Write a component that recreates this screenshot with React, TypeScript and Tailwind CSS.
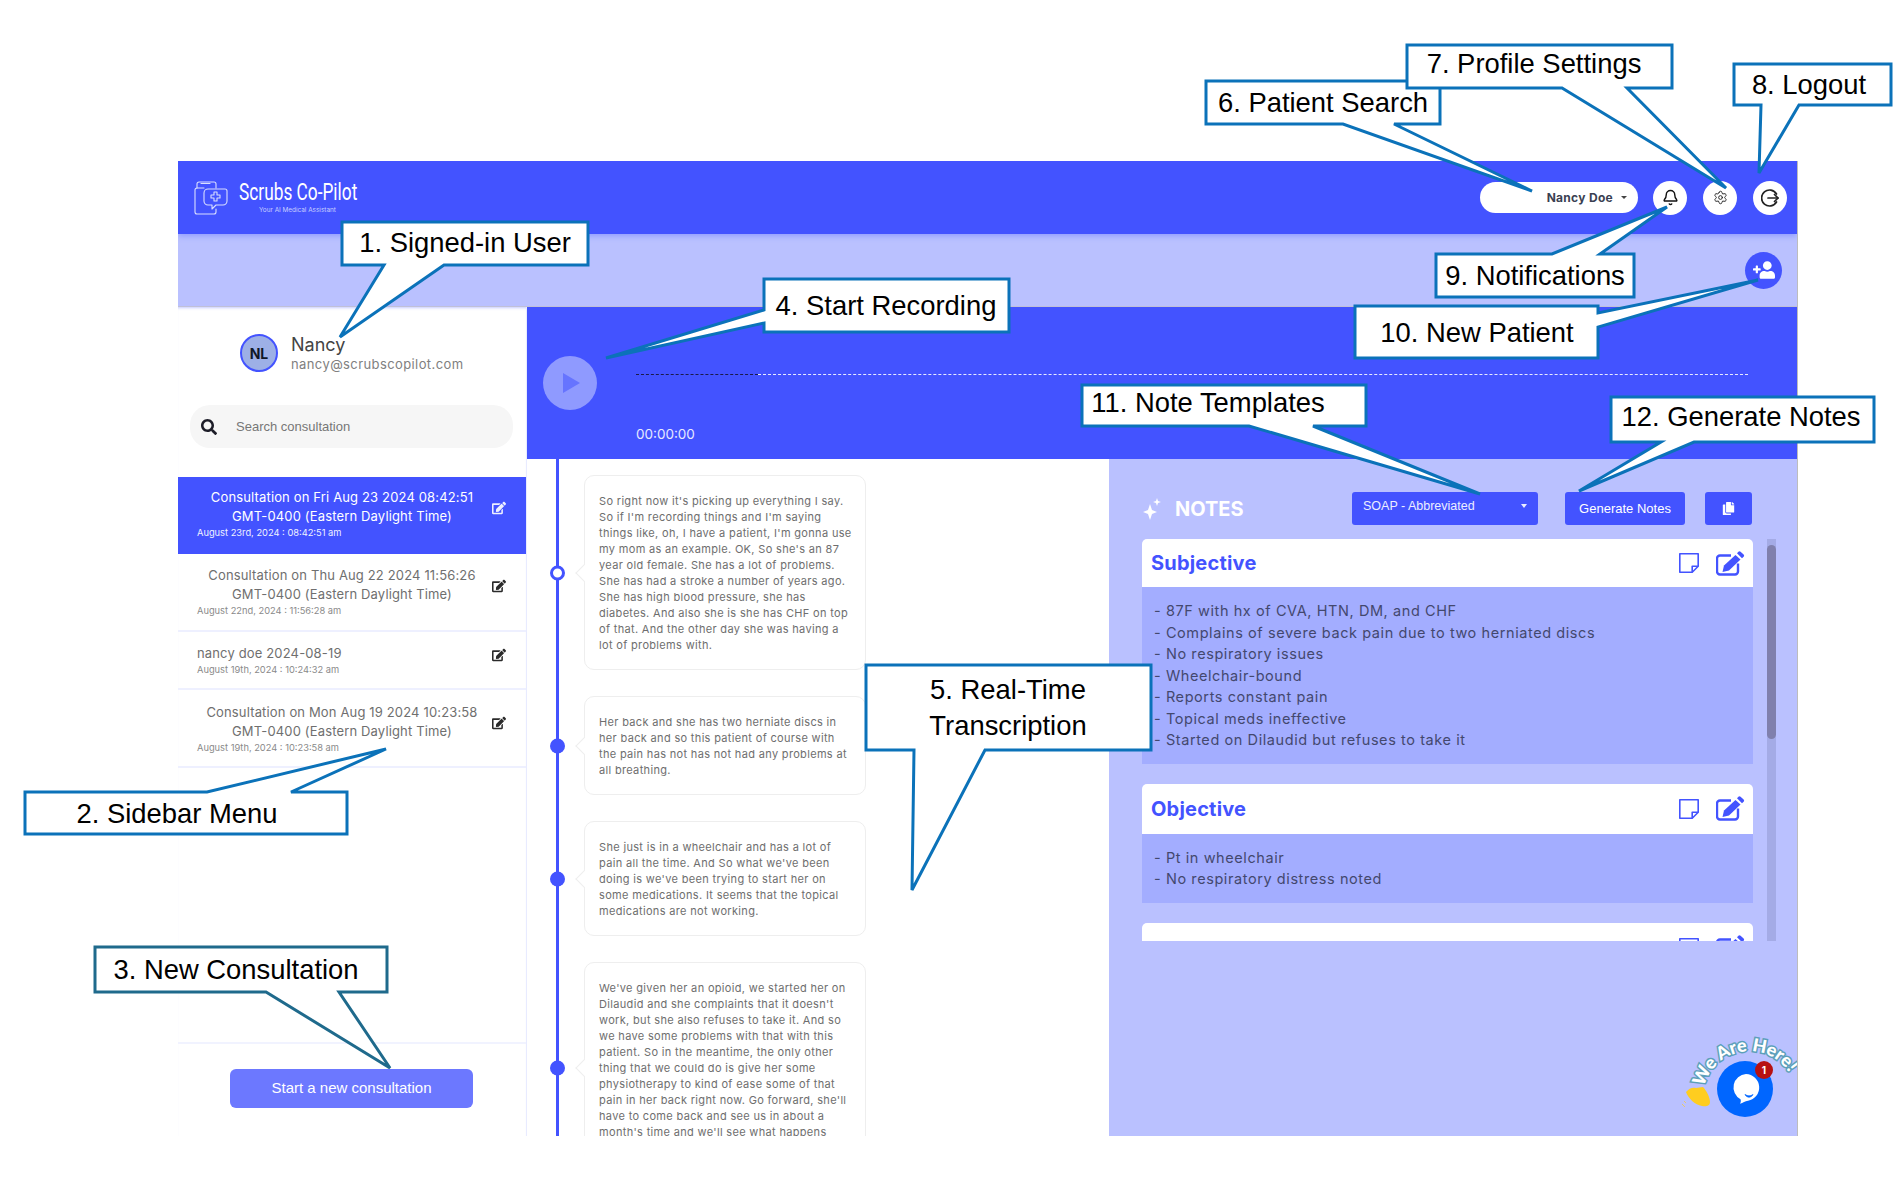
import { Bell, Settings } from 'lucide-react'
import { FaEdit, FaSearch, FaUserPlus, FaCopy } from 'react-icons/fa'

const consultations = [
  { title: ['Consultation on Fri Aug 23 2024 08:42:51', 'GMT-0400 (Eastern Daylight Time)'], date: 'August 23rd, 2024 : 08:42:51 am', row: 'h-[77px] pt-[11px] bg-[#4353ff] text-white', active: true },
  { title: ['Consultation on Thu Aug 22 2024 11:56:26', 'GMT-0400 (Eastern Daylight Time)'], date: 'August 22nd, 2024 : 11:56:28 am', row: 'h-[78px] pt-[12px] border-b-2 border-[#eef0ff] text-[#6f6f6f]' },
  { title: ['nancy doe 2024-08-19'], date: 'August 19th, 2024 : 10:24:32 am', row: 'h-[58px] pt-[12px] border-b-2 border-[#eef0ff] text-[#6f6f6f]', left: true },
  { title: ['Consultation on Mon Aug 19 2024 10:23:58', 'GMT-0400 (Eastern Daylight Time)'], date: 'August 19th, 2024 : 10:23:58 am', row: 'h-[78px] pt-[13px] border-b-2 border-[#eef0ff] text-[#6f6f6f]' },
]

const transcript = [
  {
    hollow: true,
    lines: [
      "So right now it's picking up everything I say.",
      "So if I'm recording things and I'm saying",
      "things like, oh, I have a patient, I'm gonna use",
      "my mom as an example. OK, So she's an 87",
      'year old female. She has a lot of problems.',
      'She has had a stroke a number of years ago.',
      'She has high blood pressure, she has',
      'diabetes. And also she is she has CHF on top',
      'of that. And the other day she was having a',
      'lot of problems with.',
    ],
  },
  {
    lines: [
      'Her back and she has two herniate discs in',
      'her back and so this patient of course with',
      'the pain has not has not had any problems at',
      'all breathing.',
    ],
  },
  {
    lines: [
      'She just is in a wheelchair and has a lot of',
      "pain all the time. And So what we've been",
      "doing is we've been trying to start her on",
      'some medications. It seems that the topical',
      'medications are not working.',
    ],
  },
  {
    lines: [
      "We've given her an opioid, we started her on",
      "Dilaudid and she complaints that it doesn't",
      'work, but she also refuses to take it. And so',
      'we have some problems with that with this',
      'patient. So in the meantime, the only other',
      'thing that we could do is give her some',
      'physiotherapy to kind of ease some of that',
      "pain in her back right now. Go forward, she'll",
      'have to come back and see us in about a',
      "month's time and we'll see what happens",
      'next.',
    ],
  },
]

const callouts = [
  { points: '342,222 588,222 588,265 444,265 340,337 384,265 342,265', lines: [{ text: '1. Signed-in User', x: 465, y: 252 }] },
  { points: '25,792 207,792 386,749 291,792 347,792 347,834 25,834', lines: [{ text: '2. Sidebar Menu', x: 177, y: 823 }] },
  { points: '95,947 387,947 387,992 339,992 390,1068 266,992 95,992', lines: [{ text: '3. New Consultation', x: 236, y: 979 }], dark: true },
  { points: '764,279 1009,279 1009,332 764,332 764,323 606,358 764,310', lines: [{ text: '4. Start Recording', x: 886, y: 315 }] },
  {
    points: '866,665 1151,665 1151,750 985,750 912,890 914,750 866,750',
    lines: [
      { text: '5. Real-Time', x: 1008, y: 699 },
      { text: 'Transcription', x: 1008, y: 735 },
    ],
  },
  { points: '1206,81 1440,81 1440,124 1394,124 1532,191 1343,124 1206,124', lines: [{ text: '6. Patient Search', x: 1323, y: 112 }] },
  { points: '1407,45 1672,45 1672,88 1627,88 1726,188 1562,88 1407,88', lines: [{ text: '7. Profile Settings', x: 1534, y: 73 }] },
  { points: '1734,64 1891,64 1891,105 1799,105 1759,173 1761,105 1734,105', lines: [{ text: '8. Logout', x: 1809, y: 94 }] },
  { points: '1436,254 1552,254 1667,207 1600,254 1634,254 1634,297 1436,297', lines: [{ text: '9. Notifications', x: 1535, y: 285 }] },
  { points: '1355,306 1598,306 1598,313 1758,280 1598,327 1598,358 1355,358', lines: [{ text: '10. New Patient', x: 1477, y: 342 }] },
  { points: '1082,385 1366,385 1366,426 1313,426 1480,494 1249,426 1082,426', lines: [{ text: '11. Note Templates', x: 1208, y: 412 }] },
  { points: '1611,397 1874,397 1874,442 1694,442 1579,491 1661,442 1611,442', lines: [{ text: '12. Generate Notes', x: 1741, y: 426 }] },
]

function ScrubsLogo() {
  return (
    <svg width="34" height="34" viewBox="0 0 34 34" fill="none" stroke="#d9deff" strokeWidth="1.1" strokeLinejoin="round" strokeLinecap="round">
      <path d="M10 7H3a2 2 0 0 0-2 2v22a2 2 0 0 0 2 2h17a2 2 0 0 0 2-2v-3" />
      <path d="M3 7V3a2 2 0 0 1 2-2h15a2 2 0 0 1 2 2v4" />
      <path d="M7 2.5h9" />
      <path d="M14 8h17a2 2 0 0 1 2 2v10a4 4 0 0 1-4 4h-7l-4 4v-4h-4a4 4 0 0 1-4-4v-8a4 4 0 0 1 4-4z" />
      <path d="M20 11h3v3h3v3h-3v3h-3v-3h-3v-3h3z" />
    </svg>
  )
}

function LogoutIcon() {
  return (
    <svg width="18" height="18" viewBox="0 0 18 18" fill="none" stroke="#222" strokeWidth="1.7" strokeLinecap="round" strokeLinejoin="round">
      <path d="M15.5 5A8 8 0 1 0 15.5 13" />
      <path d="M7 9h10" />
      <path d="M13.5 5.5 17 9l-3.5 3.5" />
    </svg>
  )
}

function NoteIcon() {
  return (
    <svg width="20" height="20" viewBox="0 0 20 20" fill="none" stroke="#4353ff" strokeWidth="1.6" strokeLinejoin="round">
      <path d="M.8.8h18.4v12.4l-6 6H.8z" />
      <path d="M19.2 13.2h-6v6" />
    </svg>
  )
}

function EditIcon() {
  return (
    <svg width="29" height="25" viewBox="0 0 29 25" fill="none">
      <path d="M15 4.5H4a3 3 0 0 0-3 3v13a3 3 0 0 0 3 3h15a3 3 0 0 0 3-3v-8" stroke="#4353ff" strokeWidth="2.4" />
      <path d="M19.5 4l5 4.5L13 19.5l-6.5 1.5 1.5-6.5z" fill="#4353ff" />
      <path d="M21 2.2 22.4.8a1.6 1.6 0 0 1 2.2 0l3 2.8a1.6 1.6 0 0 1 0 2.2L26 7.2z" fill="#4353ff" />
    </svg>
  )
}

function NoteCard({ title, lines, headerClass, titleClass }: { title: string; lines: string[]; headerClass: string; titleClass: string }) {
  return (
    <div className="w-[611px] shrink-0">
      <div className={`flex items-center justify-between rounded-t-[5px] bg-white pl-[9px] pr-[8px] ${headerClass}`}>
        <div className={`text-[20px] font-bold tracking-[0.2px] text-[#4353ff] ${titleClass}`}>{title}</div>
        <div className="flex items-center gap-[17px]">
          <NoteIcon />
          <EditIcon />
        </div>
      </div>
      {lines.length > 0 && (
        <div className="bg-[#a3adff] pb-[13px] pl-[12px] pt-[13px] text-[14.5px] leading-[21.5px] tracking-[0.58px] text-[#43486e]">
          {lines.map((l) => (
            <div key={l} className="whitespace-nowrap">{l}</div>
          ))}
        </div>
      )}
    </div>
  )
}

function ChatWidget() {
  return (
    <svg className="absolute left-[559px] top-[557px]" width="130" height="120" viewBox="0 0 130 120">
      <defs>
        <path id="chat-arc" d="M36 71A47 47 0 0 1 127 70" />
      </defs>
      <text fontFamily="Lato, sans-serif" fontWeight="900" fontSize="18" fill="#fff" stroke="#5c9fb9" strokeWidth="3" paintOrder="stroke">
        <textPath href="#chat-arc">We Are Here!</textPath>
      </text>
      <path d="M18 76c3-4 7-5 10-4l7-1c3 3 7 10 7 15 0 4-4 5-8 4-7-1-14-8-16-14z" fill="#ffcd1f" />
      <path d="M14 88l3 3M16 85l2 2" stroke="#e8c96a" strokeWidth="1" />
      <circle cx="77" cy="73" r="28" fill="#0066ff" />
      <path d="M78 58a13.5 13.5 0 0 1 2 26.8c-3 .5-5 2-8 3 1-2 1-3 .5-4.5A13.5 13.5 0 0 1 78 58z" fill="#fff" />
      <path d="M77 78.5c3 2 6 1.5 8 0-2 3.5-6 3.5-8 0z" fill="#0066ff" stroke="#0066ff" strokeWidth=".8" />
      <circle cx="96" cy="54" r="9" fill="#b71111" />
      <text x="96" y="58" textAnchor="middle" fontFamily="Inter, sans-serif" fontWeight="700" fontSize="10" fill="#fff">1</text>
    </svg>
  )
}

export default function App() {
  return (
    <div className="relative h-[1192px] w-[1904px] overflow-hidden bg-white pl-[178px] pt-[161px] font-['Inter',sans-serif]">
      <div className="flex h-[975px] w-[1620px] flex-col overflow-hidden border-r border-[#bdbdbd]">
        {/* top bar */}
        <div className="z-10 flex h-[73px] shrink-0 items-center bg-[#4353ff] pl-[16px] pr-[10px] shadow-[0_2px_6px_#8f9bff]">
          <ScrubsLogo />
          <div className="ml-[11px] w-[140px]">
            <div className="-mt-[3px] origin-left scale-x-[0.72] whitespace-nowrap font-['Roboto',sans-serif] text-[24px] leading-[26px] text-white">Scrubs Co-Pilot</div>
            <div className="ml-[20px] mt-[2px] whitespace-nowrap text-[6.4px] leading-[6px] text-[#c9d0ff]">Your AI Medical Assistant</div>
          </div>
          <div className="ml-auto flex h-[31px] w-[158px] items-center justify-end rounded-full bg-white pr-[11px] text-[12px] font-bold tracking-[0.3px] text-[#3a3f52]">
            Nancy Doe
            <span className="ml-[8px] h-0 w-0 border-x-[3.5px] border-t-[3.5px] border-x-transparent border-t-[#444]" />
          </div>
          <div className="ml-[15px] flex h-[34px] w-[34px] items-center justify-center rounded-full bg-white">
            <Bell size={17} strokeWidth={2} color="#111" />
          </div>
          <div className="ml-[16px] flex h-[34px] w-[34px] items-center justify-center rounded-full bg-white">
            <Settings size={15} strokeWidth={1.5} color="#222" />
          </div>
          <div className="ml-[16px] flex h-[34px] w-[34px] items-center justify-center rounded-full bg-white">
            <LogoutIcon />
          </div>
        </div>

        <div className="flex h-[73px] shrink-0 items-center justify-end border-b border-[#c0c0d8] bg-[#bac1ff] pr-[15px]">
          <div className="flex h-[37px] w-[37px] items-center justify-center rounded-full bg-[#4353ff]">
            <FaUserPlus className="-scale-x-100 text-[22px] text-white" />
          </div>
        </div>

        <div className="flex min-h-0 flex-1">
          {/* sidebar */}
          <div className="flex w-[349px] shrink-0 flex-col border-r border-[#e8ebff] bg-white shadow-[inset_0_3px_3px_-2px_#c5cbff]">
            <div className="flex h-[98px] shrink-0 items-start pl-[62px] pt-[27px]">
              <div className="flex h-[38px] w-[38px] items-center justify-center rounded-full border-2 border-[#4353ff] bg-[#9db0e6] text-[14px] font-bold text-[#111827]">NL</div>
              <div className="ml-[13px]">
                <div className="text-[18px] leading-[22px] text-[#444]">Nancy</div>
                <div className="text-[13px] leading-[17px] tracking-[0.4px] text-[#808080]">nancy@scrubscopilot.com</div>
              </div>
            </div>
            <div className="ml-[12px] flex h-[43px] w-[323px] shrink-0 items-center rounded-[20px] bg-[#f6f6f6] pl-[11px]">
              <FaSearch className="text-[16px] text-[#1d1d28]" />
              <span className="ml-[19px] mt-[1px] font-['Liberation_Sans',sans-serif] text-[13px] text-[#777]">Search consultation</span>
            </div>
            <div className="mt-[29px] min-h-0 flex-1">
              {consultations.map((c) => (
                <div key={c.date} className={`flex pl-[19px] pr-[19px] ${c.row}`}>
                  <div className="w-[290px]">
                    {c.title.map((t) => (
                      <div key={t} className={c.left ? 'whitespace-nowrap text-left text-[13px] leading-[19px] tracking-[0.15px]' : 'whitespace-nowrap text-center text-[13px] leading-[19px] tracking-[0.15px]'}>{t}</div>
                    ))}
                    <div className={c.active ? 'text-[9.3px] leading-[13px] text-[#f0f2ff]' : 'text-[9.3px] leading-[13px] text-[#8a8a8a]'}>{c.date}</div>
                  </div>
                  <FaEdit className={c.active ? 'ml-[5px] mt-[13px] text-[14px] text-[#eef0ff]' : c.left ? 'ml-[5px] mt-[4px] text-[14px] text-[#2a2a2a]' : 'ml-[5px] mt-[13px] text-[14px] text-[#2a2a2a]'} />
                </div>
              ))}
            </div>
            <div className="h-[94px] shrink-0 border-t-2 border-[#f1f3ff] pl-[52px] pt-[25px]">
              <div className="flex h-[39px] w-[243px] items-center justify-center rounded-[6px] bg-[#6c78ff] font-['Liberation_Sans',sans-serif] text-[15px] text-white">Start a new consultation</div>
            </div>
          </div>

          <div className="flex min-w-0 flex-1 flex-col">
            {/* player */}
            <div className="relative h-[152px] shrink-0 bg-[#4353ff]">
              <div className="absolute left-[16px] top-[49px] flex h-[54px] w-[54px] items-center justify-center rounded-full bg-[#8f9aff]">
                <span className="ml-[3px] h-0 w-0 border-y-[10px] border-l-[17px] border-y-transparent border-l-[#6674ff]" />
              </div>
              <div className="ml-[109px] flex w-[1112px] pt-[67px]">
                <div className="w-[122px] border-t border-dashed border-[#1a1a4a]" />
                <div className="flex-1 border-t border-dashed border-[#e8eaff]" />
              </div>
              <div className="ml-[109px] mt-[51px] text-[13.5px] leading-[16px] text-[#e7e9ff]">00:00:00</div>
            </div>

            <div className="flex min-h-0 flex-1">
              {/* transcription */}
              <div className="relative w-[582px] shrink-0 overflow-hidden bg-white pl-[57px] pt-[16px]">
                <div className="absolute bottom-0 left-[29px] top-0 w-[3px] bg-[#4353ff]" />
                <div className="flex w-[282px] flex-col gap-[26px]">
                  {transcript.map((t) => (
                    <div key={t.lines[0]} className="relative shrink-0 rounded-[10px] border border-[#eeeeee] bg-white pb-[16px] pl-[14px] pt-[17px] text-[11px] leading-[16px] tracking-[0.33px] text-[#6e6e6e]">
                      {t.lines.map((l) => (
                        <div key={l} className="whitespace-nowrap">{l}</div>
                      ))}
                      <span className="absolute left-[-7px] top-1/2 h-[13px] w-[13px] -translate-y-1/2 rotate-45 border-b border-l border-[#eeeeee] bg-white" />
                      <span
                        className={
                          t.hollow
                            ? 'absolute left-[-35px] top-1/2 h-[15px] w-[15px] -translate-y-1/2 rounded-full border-[3px] border-[#4353ff] bg-white'
                            : 'absolute left-[-35px] top-1/2 h-[15px] w-[15px] -translate-y-1/2 rounded-full bg-[#4353ff]'
                        }
                      />
                    </div>
                  ))}
                </div>
              </div>

              {/* notes */}
              <div className="relative min-w-0 flex-1 bg-[#bac1ff] pl-[33px] pt-[33px]">
                <div className="flex h-[33px] items-center">
                  <div className="flex w-[210px] items-center">
                    <svg width="18" height="24" viewBox="0 0 18 24" fill="#fff" className="ml-[1px]">
                      <path d="M7 7l2 6 5 2-5 2-2 6-2-6-5-2 5-2z" />
                      <path d="M14 1l1 3 3 1-3 1-1 3-1-3-3-1 3-1z" />
                    </svg>
                    <span className="ml-[14px] text-[20px] font-bold text-white">NOTES</span>
                  </div>
                  <div className="flex h-[33px] w-[186px] items-start justify-between rounded-[3px] bg-[#4353ff] pl-[11px] pr-[11px] pt-[6px] font-['Liberation_Sans',sans-serif] text-[12.5px] leading-[16px] text-[#eceeff]">
                    SOAP - Abbreviated
                    <span className="mt-[6px] h-0 w-0 border-x-[3.5px] border-t-[4px] border-x-transparent border-t-[#eceeff]" />
                  </div>
                  <div className="ml-[27px] flex h-[33px] w-[120px] items-center justify-center rounded-[3px] bg-[#4353ff] font-['Liberation_Sans',sans-serif] text-[13px] text-white">Generate Notes</div>
                  <div className="ml-[20px] flex h-[33px] w-[47px] items-center justify-center rounded-[3px] bg-[#4353ff]">
                    <FaCopy className="text-[13px] text-white" />
                  </div>
                </div>
                <div className="mt-[14px] flex h-[402px] overflow-hidden">
                  <div className="flex flex-col gap-[20px]">
                    <NoteCard
                      title="Subjective"
                      headerClass="h-[48px]"
                      titleClass=""
                      lines={[
                        '- 87F with hx of CVA, HTN, DM, and CHF',
                        '- Complains of severe back pain due to two herniated discs',
                        '- No respiratory issues',
                        '- Wheelchair-bound',
                        '- Reports constant pain',
                        '- Topical meds ineffective',
                        '- Started on Dilaudid but refuses to take it',
                      ]}
                    />
                    <NoteCard title="Objective" headerClass="h-[50px]" titleClass="mt-[1px]" lines={['- Pt in wheelchair', '- No respiratory distress noted']} />
                    <NoteCard title="Assessment" headerClass="h-[50px]" titleClass="mt-[7px]" lines={[]} />
                  </div>
                  <div className="ml-[14px] h-full w-[9px] bg-[#a4abe6] pt-[6px]">
                    <div className="h-[194px] w-full rounded-full bg-[#8080ad]" />
                  </div>
                </div>
                <ChatWidget />
              </div>
            </div>
          </div>
        </div>
      </div>

      {/* annotation callouts drawn over the screenshot */}
      <svg className="pointer-events-none absolute inset-0 z-20" width="1904" height="1192" viewBox="0 0 1904 1192">
        {callouts.map((c) => (
          <g key={c.lines[0].text}>
            <polygon points={c.points} fill="#fff" stroke={c.dark ? '#1f6a8c' : '#0b72b9'} strokeWidth="3" />
            {c.lines.map((l) => (
              <text key={l.text} x={l.x} y={l.y} textAnchor="middle" fontFamily="'Liberation Sans', sans-serif" fontSize="27.4" fill="#000">
                {l.text}
              </text>
            ))}
          </g>
        ))}
      </svg>
    </div>
  )
}
